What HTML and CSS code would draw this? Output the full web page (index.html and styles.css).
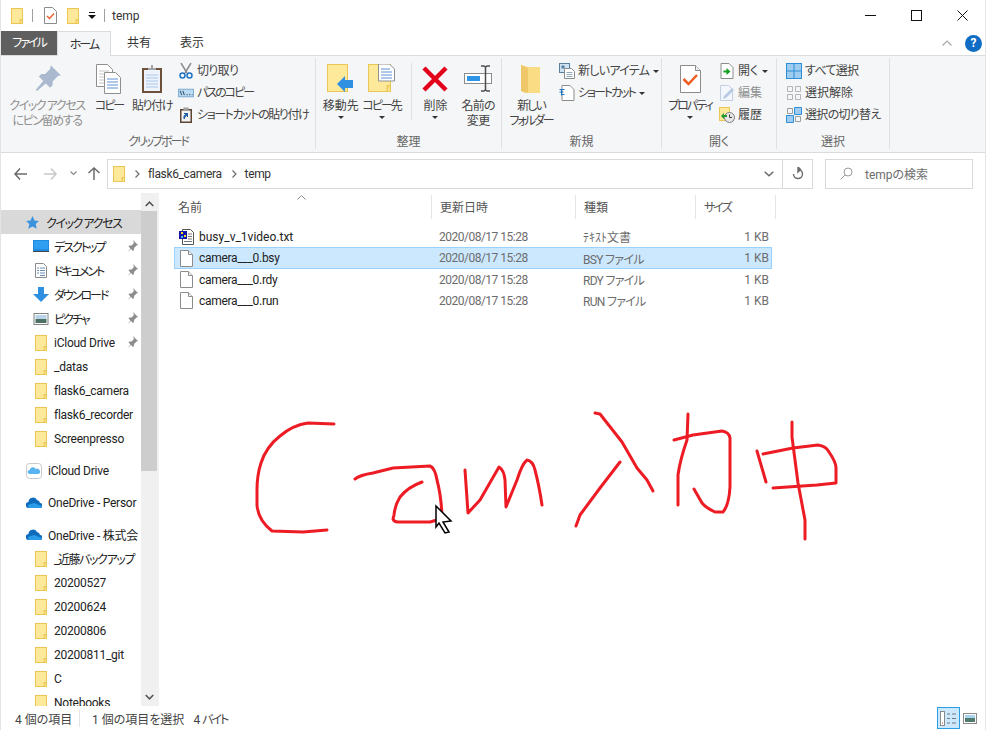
FILE: index.html
```html
<!DOCTYPE html>
<html lang="ja">
<head>
    <meta charset="UTF-8">
    <title>temp</title>
    <link rel="stylesheet" href="styles.css">
</head>
<body>
    <svg class="defs" width="0" height="0">
        <symbol id="folder" viewBox="0 0 12 16">
            <rect x="0.5" y="0.5" width="11" height="15" fill="#fee99b" stroke="#eac655"/>
            <path d="M9 15.5v-4h2.5" fill="#f7d56f" stroke="#eac655"/>
        </symbol>
        <symbol id="file" viewBox="0 0 13 17">
            <path d="M0.5 0.5h8l4 4v12h-12z" fill="#fff" stroke="#8c8c8c"/>
            <path d="M8.5 0.5v4h4" fill="#eee" stroke="#8c8c8c"/>
        </symbol>
        <symbol id="pin" viewBox="0 0 12 12">
            <path d="M7 0l5 5-1.500 0.500-2.500 2.500 0 2-1 1-2-2-4 3.500 3.500-4-2-2 1-1 2 0 2.500-2.500z" fill="#8d8d8d"/>
        </symbol>
    </svg>

    <div class="window">
        <header class="titlebar">
            <svg class="ic-folder"><use href="#folder"/></svg>
            <span class="qa-sep"></span>
            <svg class="qa-prop" width="13" height="17" viewBox="0 0 13 17">
                <path d="M0.500 0.500h8l4 4v12h-12z" fill="#fff" stroke="#8c8c8c"/>
                <path d="M3 9l2.500 2.500 4.500-5" fill="none" stroke="#e8622a" stroke-width="1.500"/>
            </svg>
            <svg class="ic-folder qa-folder"><use href="#folder"/></svg>
            <svg class="qa-drop" width="8" height="7" viewBox="0 0 8 7">
                <path d="M1 0h6v1h-6z M0 3h8l-4 4z" fill="#111"/>
            </svg>
            <span class="qa-sep qa-sep2"></span>
            <span class="title-text">temp</span>
            <div class="win-btns">
                <svg width="11" height="11" viewBox="0 0 11 11"><path d="M0 5.500h11" stroke="#111"/></svg>
                <svg width="11" height="11" viewBox="0 0 11 11"><rect x="0.500" y="0.500" width="10" height="10" fill="none" stroke="#111"/></svg>
                <svg width="11" height="11" viewBox="0 0 11 11"><path d="M0.500 0.500l10 10M10.500 0.500l-10 10" stroke="#111"/></svg>
            </div>
        </header>

        <nav class="tabs">
            <span class="tab tab-file tightest">ファイル</span>
            <span class="tab tab-home tightest">ホーム</span>
            <span class="tab tab-share">共有</span>
            <span class="tab tab-view">表示</span>
            <div class="tabs-right">
                <svg width="10" height="6" viewBox="0 0 10 6"><path d="M0.500 5.500l4.500-4.500 4.500 4.500" fill="none" stroke="#a8a8a8" stroke-width="1.200"/></svg>
                <span class="help">?</span>
            </div>
        </nav>

        <section class="ribbon">
            <div class="group group-clip">
                <div class="group-body">
                    <div class="big big-pin disabled">
                        <svg width="30" height="30" viewBox="0 0 24 24">
                            <path d="M15 1l8 8-2.500 0.800-4 4.200 0 3-2 2-3.500-3.500-7 6-1-1 6-7-3.500-3.500 2-2 3 0 4-4z" fill="#abb9cf"/>
                        </svg>
                        <span class="tighter">クイック アクセス<br>にピン留めする</span>
                    </div>
                    <div class="big big-copy">
                        <svg width="26" height="30" viewBox="0 0 26 30">
                            <path d="M0.500 0.500h11l5 5v17h-16z" fill="#fff" stroke="#8f8f8f"/>
                            <path d="M3 7h10M3 10h10M3 13h10M3 16h10M3 19h6" stroke="#c5c5c5"/>
                            <path d="M8.500 8.500h11l5 5v16h-16z" fill="#fff" stroke="#8f8f8f"/>
                            <path d="M11 15h11M11 18h11M11 21h11M11 24h11" stroke="#5c8fd6"/>
                        </svg>
                        <span class="tightest">コピー</span>
                    </div>
                    <div class="big big-paste">
                        <svg width="22" height="30" viewBox="0 0 22 30">
                            <rect x="1" y="4" width="20" height="25" fill="#6d5138"/>
                            <rect x="3" y="6" width="16" height="21" fill="#eef3fb"/>
                            <path d="M5 11h12M5 14h12M5 17h12M5 20h12M5 23h12" stroke="#a9c7ec"/>
                            <path d="M7 6v-2h3v-3h2v3h3v2z" fill="#a3a3a3"/>
                        </svg>
                        <span class="tighter">貼り付け</span>
                    </div>
                    <ul class="small-list list-clip">
                        <li>
                            <svg width="14" height="16" viewBox="0 0 14 16">
                                <path d="M2 0l6 10M12 0l-6 10" stroke="#8c8c8c" stroke-width="1.500"/>
                                <circle cx="3.500" cy="12.500" r="2.500" fill="none" stroke="#1e74c4" stroke-width="1.500"/>
                                <circle cx="10.500" cy="12.500" r="2.500" fill="none" stroke="#1e74c4" stroke-width="1.500"/>
                            </svg>
                            <span class="tight">切り取り</span>
                        </li>
                        <li>
                            <svg width="15" height="8" viewBox="0 0 15 8">
                                <rect x="0.500" y="0.500" width="14" height="7" fill="#bcdcf5" stroke="#84add0"/>
                                <path d="M2 2l1.500 4M4.500 2l1.500 4M8 5.500h1M10.500 5.500h1M13 5.500h0.500" stroke="#33536e"/>
                            </svg>
                            <span class="tightest">パスのコピー</span>
                        </li>
                        <li>
                            <svg width="13" height="16" viewBox="0 0 13 16">
                                <rect x="0.500" y="2" width="12" height="14" fill="#5d4633"/>
                                <rect x="2" y="3.500" width="9" height="11" fill="#f2f2f2"/>
                                <path d="M4 0.500h5v3h-5z" fill="#a0a0a0"/>
                                <path d="M4 12v-3l2-2h-1.500l0-1h4v4h-1v-1.500l-2 2v1.500z" fill="#1f5fa8"/>
                            </svg>
                            <span class="tighter">ショートカットの貼り付け</span>
                        </li>
                    </ul>
                </div>
                <div class="group-label tightest">クリップボード</div>
            </div>

            <div class="group group-org">
                <div class="group-body">
                    <div class="big big-move">
                        <svg width="28" height="30" viewBox="0 0 28 30">
                            <rect x="0.500" y="0.500" width="20" height="27" fill="#fee99b" stroke="#eac655"/>
                            <path d="M17 27.500v-6h3.500" fill="#f7d56f" stroke="#eac655"/>
                            <path d="M10 20l8-8v4h8v8h-8v4z" fill="#2f8fe0"/>
                        </svg>
                        <span>移動先</span>
                        <i class="caret"></i>
                    </div>
                    <div class="big big-copyto">
                        <svg width="28" height="30" viewBox="0 0 28 30">
                            <rect x="0.500" y="0.500" width="22" height="27" fill="#fee99b" stroke="#eac655"/>
                            <path d="M19 27.500v-6h3.500" fill="#f7d56f" stroke="#eac655"/>
                            <path d="M10.500 -0h11l5 5v12h-16z" fill="#fff" stroke="#8f8f8f"/>
                            <path d="M13 5h9M13 8h11M13 11h11M13 14h11" stroke="#5c8fd6"/>
                        </svg>
                        <span class="tightest">コピー先</span>
                        <i class="caret"></i>
                    </div>
                    <span class="vsep"></span>
                    <div class="big big-del">
                        <svg width="28" height="28" viewBox="0 0 28 28">
                            <path d="M3 3l22 22M25 3l-22 22" stroke="#e3001b" stroke-width="4.500"/>
                        </svg>
                        <span>削除</span>
                        <i class="caret"></i>
                    </div>
                    <div class="big big-rename">
                        <svg width="29" height="28" viewBox="0 0 29 28">
                            <rect x="0.500" y="8.500" width="27" height="10" fill="#fff" stroke="#8c8c8c"/>
                            <rect x="3" y="11" width="13" height="5" fill="#2e95e6"/>
                            <path d="M17 1h3l1.500 1 1.500-1h3M21.500 2v23M17 26h3l1.500-1 1.500 1h3" fill="none" stroke="#4d4d4d" stroke-width="1.500"/>
                        </svg>
                        <span class="tight">名前の<br>変更</span>
                    </div>
                </div>
                <div class="group-label">整理</div>
            </div>

            <div class="group group-new">
                <div class="group-body">
                    <div class="big big-newfolder">
                        <svg width="20" height="28" viewBox="0 0 20 28">
                            <path d="M0 0l7 2h12v26h-15l-4-2z" fill="#f9dc83"/>
                            <path d="M0 0l7 3v25l-7-2z" fill="#edc768"/>
                        </svg>
                        <span class="tightest">新しい<br>フォルダー</span>
                    </div>
                    <ul class="small-list list-new">
                        <li>
                            <svg width="16" height="16" viewBox="0 0 16 16">
                                <rect x="0.500" y="0.500" width="10" height="9" fill="#cfe3f5" stroke="#5a7f9e"/>
                                <rect x="2.500" y="2.500" width="3" height="3" fill="#5a7f9e"/>
                                <path d="M5.500 5.500h7l3 3v7h-10z" fill="#fff" stroke="#8c8c8c"/>
                                <path d="M7.500 9.500h6M7.500 11.500h6M7.500 13.500h6" stroke="#93a9bf"/>
                            </svg>
                            <span class="tight">新しいアイテム</span><i class="caret-s"></i>
                        </li>
                        <li>
                            <svg width="15" height="16" viewBox="0 0 15 16">
                                <path d="M2.500 0.500h8l4 4v11h-12z" fill="#fff" stroke="#8c8c8c"/>
                                <path d="M0 4.500h5M0 7h4M2 9.500h3M2 4.500v6" stroke="#1e74c4" fill="none"/>
                            </svg>
                            <span class="tightest">ショートカット</span><i class="caret-s"></i>
                        </li>
                    </ul>
                </div>
                <div class="group-label">新規</div>
            </div>

            <div class="group group-open">
                <div class="group-body">
                    <div class="big big-prop">
                        <svg width="21" height="28" viewBox="0 0 21 28">
                            <path d="M0.500 0.500h15l5 5v22h-20z" fill="#fff" stroke="#8c8c8c"/>
                            <path d="M15.500 0.500v5h5" fill="#eee" stroke="#8c8c8c"/>
                            <path d="M3.500 14l5 5 8.500-9" fill="none" stroke="#ee5d1f" stroke-width="2.500"/>
                        </svg>
                        <span class="tightest">プロパティ</span>
                        <i class="caret"></i>
                    </div>
                    <ul class="small-list list-open">
                        <li>
                            <svg width="13" height="16" viewBox="0 0 13 16">
                                <path d="M0.500 0.500h8l4 4v11h-12z" fill="#fff" stroke="#8c8c8c"/>
                                <path d="M3 7.500h3v-2.500l4 3.500-4 3.500v-2.500h-3z" fill="#12a01f"/>
                            </svg>
                            <span>開く</span><i class="caret-s"></i>
                        </li>
                        <li class="dim">
                            <svg width="14" height="16" viewBox="0 0 14 16">
                                <path d="M0.500 0.500h8l4 4v11h-12z" fill="#f3f6fb" stroke="#c3cfe0"/>
                                <path d="M3 14l1-3 8-8 2 2-8 8z" fill="#b9cbe4"/>
                            </svg>
                            <span>編集</span>
                        </li>
                        <li>
                            <svg width="16" height="16" viewBox="0 0 16 16">
                                <rect x="0.500" y="0.500" width="10" height="13" fill="#fee99b" stroke="#eac655"/>
                                <circle cx="10.500" cy="10.500" r="5" fill="#e6e6e6" stroke="#7f7f7f"/>
                                <path d="M10.500 7.500v3h2.500" fill="none" stroke="#444"/>
                                <path d="M2 9l3-3v2h3v2h-3v2z" fill="#1f9a2e"/>
                            </svg>
                            <span>履歴</span>
                        </li>
                    </ul>
                </div>
                <div class="group-label">開く</div>
            </div>

            <div class="group group-select">
                <div class="group-body">
                    <ul class="small-list list-select">
                        <li>
                            <svg width="16" height="16" viewBox="0 0 16 16">
                                <rect x="0.500" y="0.500" width="15" height="15" fill="#9ecbf0" stroke="#2e8fd9"/>
                                <path d="M8 0v16M0 8h16" stroke="#2e8fd9"/>
                            </svg>
                            <span class="tight">すべて選択</span>
                        </li>
                        <li>
                            <svg width="16" height="16" viewBox="0 0 16 16">
                                <path d="M1.500 1.500h5v5h-5zM9.500 1.500h5v5h-5zM1.500 9.500h5v5h-5zM9.500 9.500h5v5h-5z" fill="none" stroke="#b5b5b5"/>
                            </svg>
                            <span>選択解除</span>
                        </li>
                        <li>
                            <svg width="16" height="16" viewBox="0 0 16 16">
                                <path d="M1.500 1.500h5v5h-5zM9.500 9.500h5v5h-5z" fill="none" stroke="#9d9d9d"/>
                                <path d="M8.500 0.500h7v7h-7zM0.500 8.500h7v7h-7z" fill="#9ecbf0" stroke="#2e8fd9"/>
                            </svg>
                            <span class="tight">選択の切り替え</span>
                        </li>
                    </ul>
                </div>
                <div class="group-label">選択</div>
            </div>
        </section>

        <div class="addressbar">
            <div class="nav-btns">
                <svg width="13" height="12" viewBox="0 0 13 12"><path d="M6 0.500l-5 5.500 5 5.500M1 6h12" fill="none" stroke="#6b6b6b" stroke-width="1.500"/></svg>
                <svg width="13" height="12" viewBox="0 0 13 12"><path d="M7 0.500l5 5.500-5 5.500M12 6h-12" fill="none" stroke="#c8c8c8" stroke-width="1.500"/></svg>
                <svg width="7" height="5" viewBox="0 0 7 5"><path d="M0.500 0.500l3 3 3-3" fill="none" stroke="#8a8a8a" stroke-width="1.200"/></svg>
                <svg width="12" height="13" viewBox="0 0 12 13"><path d="M0.500 6l5.500-5 5.500 5M6 1v12" fill="none" stroke="#6b6b6b" stroke-width="1.500"/></svg>
            </div>
            <div class="path-box">
                <svg class="ic-folder"><use href="#folder"/></svg>
                <svg class="crumb-sep" width="5" height="8" viewBox="0 0 5 8"><path d="M0.500 0.500l3.500 3.500-3.500 3.500" fill="none" stroke="#6b6b6b" stroke-width="1.200"/></svg>
                <span>flask6_camera</span>
                <svg class="crumb-sep" width="5" height="8" viewBox="0 0 5 8"><path d="M0.500 0.500l3.500 3.500-3.500 3.500" fill="none" stroke="#6b6b6b" stroke-width="1.200"/></svg>
                <span>temp</span>
                <svg class="path-drop" width="10" height="6" viewBox="0 0 10 6"><path d="M0.700 0.700l4.300 4 4.300-4" fill="none" stroke="#6b6b6b" stroke-width="1.500"/></svg>
            </div>
            <div class="refresh-box">
                <svg width="12" height="13" viewBox="0 0 12 13"><path d="M6 2.500a4.500 4.500 0 1 1-4.500 4.500M6 0v5l2.500-2.500z" fill="none" stroke="#6b6b6b" stroke-width="1.400"/></svg>
            </div>
            <div class="search-box">
                <svg width="13" height="13" viewBox="0 0 13 13"><circle cx="8" cy="5" r="4" fill="none" stroke="#9a9a9a"/><path d="M5 8l-4.500 4.500" stroke="#9a9a9a"/></svg>
                <span>tempの検索</span>
            </div>
        </div>

        <main class="main">
            <aside class="sidebar">
                <div class="tree">
                    <div class="node node-top active">
                        <svg width="13" height="13" viewBox="0 0 13 13"><path d="M6.500 0l2 4.500 4.500 0.500-3.300 3 1 4.800-4.200-2.400-4.200 2.400 1-4.800-3.300-3 4.500-0.500z" fill="#3b93dd"/></svg>
                        <span class="tighter">クイック アクセス</span>
                    </div>
                    <div class="node node-sub">
                        <svg width="16" height="13" viewBox="0 0 16 13"><rect width="16" height="11" fill="#1c8ae0"/><rect x="1" y="1" width="14" height="8" fill="#2f9df0"/><rect y="11" width="16" height="1" fill="#444"/></svg>
                        <span class="tightest">デスクトップ</span>
                        <svg class="pin"><use href="#pin"/></svg>
                    </div>
                    <div class="node node-sub">
                        <svg width="12" height="15" viewBox="0 0 12 15"><path d="M0.500 0.500h8l3 3v11h-11z" fill="#fff" stroke="#8c8c8c"/><path d="M2 5h2M5 5h5M2 7.500h2M5 7.500h5M2 10h2M5 10h5M5 12.500h5" stroke="#6b8fb3"/></svg>
                        <span class="tightest">ドキュメント</span>
                        <svg class="pin"><use href="#pin"/></svg>
                    </div>
                    <div class="node node-sub">
                        <svg width="16" height="15" viewBox="0 0 16 15"><path d="M5 0h6v7h5l-8 8-8-8h5z" fill="#2f8fe0"/></svg>
                        <span class="tightest">ダウンロード</span>
                        <svg class="pin"><use href="#pin"/></svg>
                    </div>
                    <div class="node node-sub">
                        <svg width="15" height="12" viewBox="0 0 15 12"><rect x="0.500" y="0.500" width="14" height="11" fill="#fff" stroke="#808080"/><rect x="2" y="2" width="11" height="4" fill="#b8d4e8"/><rect x="2" y="6" width="11" height="4" fill="#4c7064"/></svg>
                        <span class="tightest">ピクチャ</span>
                        <svg class="pin"><use href="#pin"/></svg>
                    </div>
                    <div class="node node-sub">
                        <svg class="ic-folder"><use href="#folder"/></svg>
                        <span>iCloud Drive</span>
                        <svg class="pin"><use href="#pin"/></svg>
                    </div>
                    <div class="node node-sub"><svg class="ic-folder"><use href="#folder"/></svg><span>_datas</span></div>
                    <div class="node node-sub"><svg class="ic-folder"><use href="#folder"/></svg><span>flask6_camera</span></div>
                    <div class="node node-sub"><svg class="ic-folder"><use href="#folder"/></svg><span>flask6_recorder</span></div>
                    <div class="node node-sub"><svg class="ic-folder"><use href="#folder"/></svg><span>Screenpresso</span></div>

                    <div class="node node-top spaced">
                        <svg width="16" height="16" viewBox="0 0 16 16"><rect x="0.500" y="0.500" width="15" height="15" rx="3" fill="#fff" stroke="#c9c9c9"/><path d="M3.500 11a2 2 0 0 1 0.300-4 3.200 3.200 0 0 1 6-1 2.600 2.600 0 0 1 2.700 5z" fill="#58b3f0"/></svg>
                        <span>iCloud Drive</span>
                    </div>
                    <div class="node node-top spaced">
                        <svg width="16" height="11" viewBox="0 0 16 11"><path d="M3 11a3 3 0 0 1-0.500-6 4.500 4.500 0 0 1 8.500-2 3.500 3.500 0 0 1 3 3 2.500 2.500 0 0 1 0 5z" fill="#0f6cbd"/><path d="M3 11a2 2 0 0 1 0-3.500l5-1.500 8 3a2.500 2.500 0 0 1-2 2z" fill="#2a9be8"/></svg>
                        <span>OneDrive - Persor</span>
                    </div>
                    <div class="node node-top spaced">
                        <svg width="16" height="11" viewBox="0 0 16 11"><path d="M3 11a3 3 0 0 1-0.500-6 4.500 4.500 0 0 1 8.500-2 3.500 3.500 0 0 1 3 3 2.500 2.500 0 0 1 0 5z" fill="#0f6cbd"/><path d="M3 11a2 2 0 0 1 0-3.500l5-1.500 8 3a2.500 2.500 0 0 1-2 2z" fill="#2a9be8"/></svg>
                        <span>OneDrive - 株式会</span>
                    </div>
                    <div class="node node-sub"><svg class="ic-folder"><use href="#folder"/></svg><span class="tighter">_近藤バックアップ</span></div>
                    <div class="node node-sub"><svg class="ic-folder"><use href="#folder"/></svg><span>20200527</span></div>
                    <div class="node node-sub"><svg class="ic-folder"><use href="#folder"/></svg><span>20200624</span></div>
                    <div class="node node-sub"><svg class="ic-folder"><use href="#folder"/></svg><span>20200806</span></div>
                    <div class="node node-sub"><svg class="ic-folder"><use href="#folder"/></svg><span>20200811_git</span></div>
                    <div class="node node-sub"><svg class="ic-folder"><use href="#folder"/></svg><span>C</span></div>
                    <div class="node node-sub"><svg class="ic-folder"><use href="#folder"/></svg><span>Notebooks</span></div>
                </div>
                <div class="scrollbar">
                    <svg width="9" height="6" viewBox="0 0 9 6"><path d="M0.700 5l3.800-3.800 3.800 3.800" fill="none" stroke="#555" stroke-width="1.600"/></svg>
                    <div class="track"><div class="thumb"></div></div>
                    <svg width="9" height="6" viewBox="0 0 9 6"><path d="M0.700 1l3.800 3.800 3.800-3.800" fill="none" stroke="#555" stroke-width="1.600"/></svg>
                </div>
            </aside>

            <div class="files">
                <svg class="sort" width="9" height="5" viewBox="0 0 9 5"><path d="M0.500 4.500l4-4 4 4" fill="none" stroke="#8a8a8a"/></svg>
                <div class="file-head">
                    <span class="col col-name">名前</span>
                    <span class="col col-date">更新日時</span>
                    <span class="col col-type">種類</span>
                    <span class="col col-size tightest">サイズ</span>
                </div>
                <div class="file-row">
                    <span class="cell-name">
                        <svg width="15" height="16" viewBox="0 0 15 16">
                            <path d="M3.500 0.500h8l3 3v12h-11z" fill="#fff" stroke="#555"/>
                            <path d="M9 5h4M9 7.500h4M9 10h4M5 12.500h8" stroke="#777"/>
                            <rect x="0" y="2" width="8" height="8" fill="#1515b0"/>
                            <rect x="2" y="3" width="2" height="2" fill="#f2e21a"/>
                            <rect x="5" y="6" width="2" height="2" fill="#f2e21a"/>
                            <rect x="2" y="7" width="2" height="2" fill="#3fbfe8"/>
                        </svg>
                        busy_v_1video.txt
                    </span>
                    <span class="cell-date">2020/08/17 15:28</span>
                    <span class="cell-type">ﾃｷｽﾄ文書</span>
                    <span class="cell-size">1 KB</span>
                </div>
                <div class="file-row selected">
                    <span class="cell-name camera"><svg class="ic-file"><use href="#file"/></svg>camera___0.bsy</span>
                    <span class="cell-date">2020/08/17 15:28</span>
                    <span class="cell-type tight">BSY ファイル</span>
                    <span class="cell-size">1 KB</span>
                </div>
                <div class="file-row">
                    <span class="cell-name camera"><svg class="ic-file"><use href="#file"/></svg>camera___0.rdy</span>
                    <span class="cell-date">2020/08/17 15:28</span>
                    <span class="cell-type tight">RDY ファイル</span>
                    <span class="cell-size">1 KB</span>
                </div>
                <div class="file-row">
                    <span class="cell-name camera"><svg class="ic-file"><use href="#file"/></svg>camera___0.run</span>
                    <span class="cell-date">2020/08/17 15:28</span>
                    <span class="cell-type tight">RUN ファイル</span>
                    <span class="cell-size">1 KB</span>
                </div>
            </div>
        </main>

        <footer class="statusbar">
            <span class="st-count">4 個の項目</span>
            <span class="st-sel">1 個の項目を選択</span>
            <span class="st-bytes tightest">4 バイト</span>
            <div class="view-btns">
                <span class="view-on">
                    <svg width="17" height="15" viewBox="0 0 17 15">
                        <rect x="0.500" y="0.500" width="4" height="14" fill="#fff" stroke="#8a8a8a"/>
                        <path d="M7 3h3M12 3h4M7 7.500h3M12 7.500h4M7 12h3M12 12h4" stroke="#777" stroke-width="1.200"/>
                        <path d="M2 12h1" stroke="#c0392b"/>
                    </svg>
                </span>
                <svg width="14" height="11" viewBox="0 0 14 11">
                    <rect x="0.500" y="0.500" width="13" height="10" fill="#fff" stroke="#8a8a8a"/>
                    <rect x="2" y="2" width="10" height="3" fill="#a9d3ef"/>
                    <rect x="2" y="5" width="10" height="4" fill="#4f7a6d"/>
                </svg>
            </div>
        </footer>
    </div>

    <!-- red scribble drawn over the window, coordinates are the page's own -->
    <svg class="ink" width="986" height="730" viewBox="0 0 986 730">
        <g fill="none" stroke="#ed1c24" stroke-width="3" stroke-linecap="round" stroke-linejoin="round">
            <path d="M334 424L308 423Q293 425 280 436Q266 447 261 463Q257 475 257 490L257 505Q258 520 272 531L303 532L327 530"/>
            <path d="M355 479Q360 475 373 473L393 468L430 466Q435 468 437 480Q441 495 442 515"/>
            <path d="M422 482Q408 487 400 497Q395 505 394 515L393 519Q394 522 398 522L430 522Q436 521 441 517"/>
            <path d="M465 470L468 513L480 500L499 467Q504 470 505 480L506 507L517 480Q522 464 527 460Q533 461 535 470Q539 485 542 505"/>
            <path d="M595 413L600 414L622 442L637 468L647 480L653 491"/>
            <path d="M620 462L600 488L580 515L576 526"/>
            <path d="M688 414L687 440Q680 460 678 475L678 505"/>
            <path d="M674 440L693 435L722 431Q729 432 730 438L730 487Q729 505 723 512L715 512Q706 508 702 503L694 489"/>
            <path d="M792 422L792 437L798 483L805 520L805 539"/>
            <path d="M757 451L766 482"/>
            <path d="M763 454L793 448L818 445Q826 446 829 452Q836 462 836 468L836 483L817 485L773 488"/>
        </g>
        <path d="M436 506L451 521L443 522L449 532L445 533L439 523L436 527Z" fill="#fff" stroke="#000" stroke-width="1.500"/>
    </svg>
</body>
</html>
```

FILE: styles.css
```css
* {
    box-sizing: border-box;
}

html, body {
    margin: 0;
    padding: 0;
}

body {
    font-family: Roboto, "Noto Sans CJK JP", sans-serif;
    font-feature-settings: "palt";
    font-size: 12px;
    color: #1a1a1a;
    background-color: white;
}

svg {
    display: block;
    flex: none;
}

.defs {
    position: absolute;
}

/* the kana of the original font run narrower than the CJK one here */
.tight {
    letter-spacing: -0.7px;
}

.tighter {
    letter-spacing: -1.4px;
}

.tightest {
    letter-spacing: -2px;
}

.ic-folder {
    width: 12px;
    height: 16px;
}

.ic-file {
    width: 13px;
    height: 17px;
    margin: 0 1px;
}

.window {
    width: 986px;
    height: 730px;
    display: flex;
    flex-direction: column;
    overflow: hidden;
    border-left: 1px solid #e4e4e4;
    border-right: 1px solid #e4e4e4;
}

/* title bar */
.titlebar {
    height: 31px;
    display: flex;
    align-items: center;
    padding-left: 10px;
    flex: none;
}

.qa-sep {
    width: 1px;
    height: 13px;
    background-color: #a0a0a0;
    margin-left: 9px;
}

.qa-prop {
    margin-left: 11px;
}

.qa-folder {
    margin-left: 10px;
}

.qa-drop {
    margin-left: 9px;
}

.qa-sep2 {
    margin-left: 8px;
}

.title-text {
    margin-left: 7px;
    font-size: 12px;
    color: #333;
}

.win-btns {
    margin-left: auto;
    display: flex;
    gap: 35px;
    padding-right: 17px;
}

/* tabs */
.tabs {
    height: 25px;
    flex: none;
    display: flex;
    align-items: flex-end;
    border-bottom: 1px solid #dadbdc;
    position: relative;
}

.tab {
    height: 24px;
    line-height: 25px;
    text-align: center;
    color: #333;
}

.tab-file {
    width: 56px;
    background-color: #5f5f5f;
    color: white;
}

.tab-home {
    width: 54px;
    height: 25px;
    line-height: 26px;
    margin-bottom: -1px;
    background-color: #f5f6f7;
    border: 1px solid #dadbdc;
    border-bottom: none;
}

.tab-share {
    width: 56px;
}

.tab-view {
    width: 50px;
}

.tabs-right {
    margin-left: auto;
    display: flex;
    align-items: center;
    gap: 13px;
    padding-right: 3px;
    height: 24px;
}

.help {
    width: 17px;
    height: 17px;
    border-radius: 50%;
    background-color: #0f6cc4;
    color: white;
    font-weight: bold;
    font-size: 12px;
    line-height: 17px;
    text-align: center;
}

/* ribbon */
.ribbon {
    height: 97px;
    flex: none;
    display: flex;
    background-color: #f5f6f7;
    border-bottom: 1px solid #dadbdc;
    padding-top: 2px;
    padding-bottom: 3px;
}

.group {
    display: flex;
    flex-direction: column;
    border-right: 1px solid #e0e1e2;
}

.group-clip {
    width: 315px;
}

.group-org {
    width: 186px;
}

.group-new {
    width: 160px;
}

.group-open {
    width: 115px;
}

.group-select {
    width: 113px;
}

.group-body {
    flex: 1;
    display: flex;
    position: relative;
    color: #444;
    line-height: 15px;
}

.group-label {
    height: 20px;
    line-height: 26px;
    text-align: center;
    color: #666;
}

.big {
    display: flex;
    flex-direction: column;
    align-items: center;
    text-align: center;
    padding-top: 6px;
}

.big svg {
    height: 30px;
    margin-bottom: 5px;
}

.big span {
    white-space: nowrap;
}

.disabled {
    color: #8f8f8f;
}

.big-pin {
    width: 78px;
    margin-left: 7px;
}

.big-copy {
    width: 44px;
    margin-left: 1px;
}

.big-paste {
    width: 42px;
}

.big-move {
    width: 40px;
    margin-left: 5px;
}

.big-copyto {
    width: 42px;
}

.vsep {
    width: 1px;
    height: 57px;
    background-color: #e0e1e2;
    margin: 5px 3px 0 8px;
}

.big-del {
    width: 36px;
    margin-left: 3px;
}

.big-rename {
    width: 46px;
    margin-left: 2px;
}

.big-newfolder {
    width: 50px;
    margin-left: 4px;
}

.big-prop {
    width: 56px;
}

.caret {
    width: 0;
    height: 0;
    margin-top: 2px;
    border-left: 3px solid transparent;
    border-right: 3px solid transparent;
    border-top: 3px solid #333;
}

.caret-s {
    width: 0;
    height: 0;
    margin-left: 1px;
    border-left: 3px solid transparent;
    border-right: 3px solid transparent;
    border-top: 3px solid #333;
}

.small-list {
    list-style: none;
    margin: 0;
    padding: 2px 0 0;
}

.small-list li {
    height: 22px;
    display: flex;
    align-items: center;
    gap: 3px;
    white-space: nowrap;
}

.small-list li svg {
    width: 16px;
    height: 16px;
}

.list-clip {
    margin-left: 5px;
}

.list-new {
    margin-left: 3px;
}

.list-open {
    margin-left: 1px;
}

.list-select {
    margin-left: 9px;
}

.dim {
    color: #8f8f8f;
}

/* address bar */
.addressbar {
    height: 40px;
    flex: none;
    display: flex;
    align-items: center;
    padding-top: 1px;
}

.nav-btns {
    width: 106px;
    display: flex;
    align-items: center;
    padding-left: 13px;
    gap: 17px;
}

.nav-btns svg:nth-child(3) {
    margin-left: -4px;
    margin-right: -6px;
}

.path-box {
    width: 676px;
    height: 30px;
    display: flex;
    align-items: center;
    padding-left: 5px;
    border: 1px solid #d9d9d9;
    color: #333;
    gap: 7px;
    letter-spacing: -0.35px;
}

.crumb-sep {
    margin: 0 1px 0 3px;
}

.path-drop {
    margin-left: auto;
    margin-right: 8px;
}

.refresh-box {
    width: 30px;
    height: 30px;
    display: flex;
    align-items: center;
    justify-content: center;
    border: 1px solid #d9d9d9;
    border-left: none;
}

.search-box {
    width: 148px;
    height: 30px;
    margin-left: 12px;
    display: flex;
    align-items: center;
    gap: 12px;
    padding-left: 14px;
    border: 1px solid #d9d9d9;
    color: #6d6d6d;
}

/* main area */
.main {
    flex: 1;
    display: flex;
    min-height: 0;
}

.sidebar {
    width: 159px;
    flex: none;
    display: flex;
    border-right: 2px solid #f1f1f1;
    margin-left: -1px;
}

.tree {
    width: 141px;
    flex: none;
    padding-top: 17px;
    overflow: hidden;
    color: #222;
    letter-spacing: -0.25px;
}

.node {
    height: 24px;
    padding-top: 1px;
    display: flex;
    align-items: center;
    white-space: nowrap;
    position: relative;
}

.node-top {
    padding-left: 26px;
}

.node-top svg {
    margin-right: 6px;
}

.node-sub {
    padding-left: 33px;
}

.node-sub > svg:first-child {
    width: 16px;
    margin-right: 5px;
}

.spaced {
    margin-top: 8px;
}

.active {
    background-color: #d9d9d9;
}

.active svg {
    margin-right: 7px;
}

.pin {
    width: 12px;
    height: 12px;
    position: absolute;
    left: 126px;
    top: 6px;
}

.scrollbar {
    width: 16px;
    flex: none;
    display: flex;
    flex-direction: column;
    align-items: center;
    background-color: #f0f0f0;
    padding: 8px 0 6px;
}

.track {
    flex: 1;
    width: 100%;
    padding-top: 4px;
    padding-bottom: 6px;
}

.thumb {
    height: 260px;
    background-color: #cdcdcd;
}

/* file list */
.files {
    flex: 1;
    position: relative;
    padding-left: 15px;
    min-width: 0;
}

.sort {
    position: absolute;
    left: 138px;
    top: 2px;
}

.file-head {
    height: 33px;
    display: flex;
    padding-top: 2px;
}

.col {
    height: 24px;
    line-height: 27px;
    padding-left: 4px;
    color: #555;
    border-right: 1px solid #e5e5e5;
}

.col-name {
    width: 258px;
}

.col-date {
    width: 144px;
    padding-left: 8px;
}

.col-type {
    width: 120px;
    padding-left: 8px;
}

.col-size {
    width: 80px;
    padding-left: 8px;
}

.file-row {
    width: 598px;
    height: 21px;
    display: flex;
    align-items: center;
    color: #6d6d6d;
    border: 1px solid transparent;
}

.selected {
    height: 22px;
    background-color: #cce8ff;
    border-color: #99d1ff;
}

.cell-name {
    width: 257px;
    display: flex;
    align-items: center;
    gap: 5px;
    padding-left: 4px;
    color: #222;
}

.camera {
    letter-spacing: -0.3px;
}

.cell-date {
    width: 144px;
    padding-left: 7px;
    letter-spacing: -0.5px;
}

.cell-type {
    width: 120px;
    padding-left: 7px;
}

.cell-size {
    width: 73px;
    text-align: right;
}

/* status bar */
.statusbar {
    height: 24px;
    flex: none;
    display: flex;
    align-items: center;
    padding-left: 14px;
    color: #444;
    background-color: white;
    position: relative;
}

.st-count {
    width: 65px;
    border-right: 1px solid #e4e4e4;
}

.st-sel {
    margin-left: 12px;
}

.st-bytes {
    margin-left: 9px;
    word-spacing: 3px;
}

.view-btns {
    margin-left: auto;
    display: flex;
    align-items: center;
    gap: 3px;
    padding-right: 8px;
}

.view-on {
    width: 23px;
    height: 22px;
    display: flex;
    align-items: center;
    justify-content: center;
    background-color: #cce8ff;
    border: 1px solid #2a9fe0;
}

/* scribble on top of everything */
.ink {
    position: absolute;
    left: 0;
    top: 0;
    pointer-events: none;
}
```
